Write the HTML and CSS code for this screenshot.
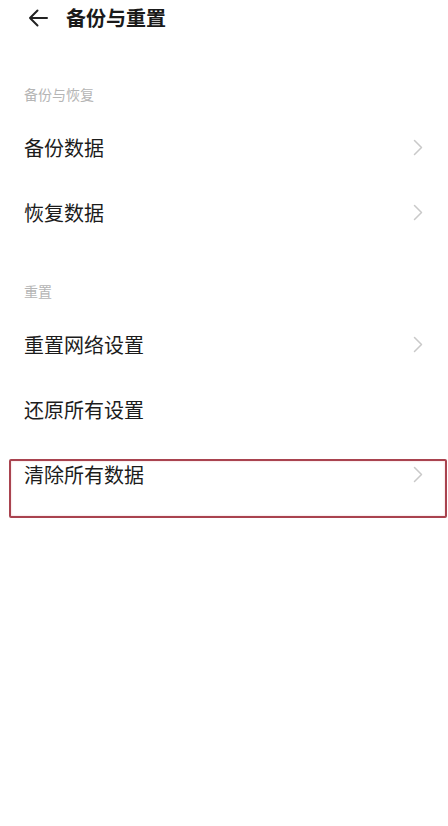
FILE: index.html
```html
<!DOCTYPE html>
<html lang="zh-CN">

<head>
  <meta charset="utf-8">
  <meta name="viewport" content="width=device-width, initial-scale=1">
  <title>备份与重置</title>
  <link rel="stylesheet" href="styles.css">
</head>

<body>
  <!-- 顶部标题栏 -->
  <header class="top-bar">
    <svg class="back" width="20" height="18" viewBox="0 0 20 18">
      <path d="M19 9H2M9.5 1.5L2 9l7.5 7.5" fill="none" stroke="#222" stroke-width="2" stroke-linecap="round" stroke-linejoin="round" />
    </svg>
    <h1 class="title">备份与重置</h1>
  </header>

  <main class="list">
    <!-- 备份与恢复 -->
    <section class="group">
      <div class="group-title">备份与恢复</div>
      <div class="item">
        <span>备份数据</span>
        <svg class="arrow" width="10" height="17" viewBox="0 0 10 17"><path d="M1.5 1.5l7 7-7 7" /></svg>
      </div>
      <div class="item">
        <span>恢复数据</span>
        <svg class="arrow" width="10" height="17" viewBox="0 0 10 17"><path d="M1.5 1.5l7 7-7 7" /></svg>
      </div>
    </section>

    <!-- 重置 -->
    <section class="group">
      <div class="group-title">重置</div>
      <div class="item">
        <span>重置网络设置</span>
        <svg class="arrow" width="10" height="17" viewBox="0 0 10 17"><path d="M1.5 1.5l7 7-7 7" /></svg>
      </div>
      <div class="item">
        <span>还原所有设置</span>
      </div>
      <div class="item marked">
        <span>清除所有数据</span>
        <svg class="arrow" width="10" height="17" viewBox="0 0 10 17"><path d="M1.5 1.5l7 7-7 7" /></svg>
      </div>
    </section>
  </main>
</body>

</html>
```

FILE: styles.css
```css
* {
  padding: 0;
  margin: 0;
  box-sizing: border-box;
}

body {
  width: 448px;
  min-height: 826px;
  background-color: #fff;
  font-family: "Noto Sans CJK SC", "Noto Sans", sans-serif;
  color: #1c1c1c;
}

/* 顶部标题栏 */
.top-bar {
  height: 36px;
  display: flex;
  align-items: center;
  padding-left: 28px;
}

.top-bar .back {
  margin-right: 18px;
}

.title {
  font-size: 20px;
  font-weight: 700;
  line-height: 36px;
  color: #1a1a1a;
}

/* 列表 */
.list {
  padding-top: 12px;
}

.group {
  padding-top: 36px;
}

.group-title {
  font-size: 14px;
  line-height: 20px;
  color: #b5b5b5;
  padding-left: 24px;
  margin-bottom: 11px;
}

.item {
  height: 65px;
  display: flex;
  align-items: center;
  justify-content: space-between;
  padding: 0 25px 0 24px;
  font-size: 20px;
  color: #1c1c1c;
}

.item .arrow path {
  fill: none;
  stroke: #c9c9c9;
  stroke-width: 1.5;
  stroke-linecap: round;
  stroke-linejoin: round;
}

/* 红框标注 */
.marked {
  position: relative;
}

.marked::after {
  content: "";
  position: absolute;
  left: 9px;
  right: 1px;
  top: 17px;
  height: 59px;
  box-sizing: border-box;
  border: 2px solid #a9434f;
  border-radius: 2px;
  box-shadow: inset 0 0 2px rgba(200, 80, 90, .35);
}
```
